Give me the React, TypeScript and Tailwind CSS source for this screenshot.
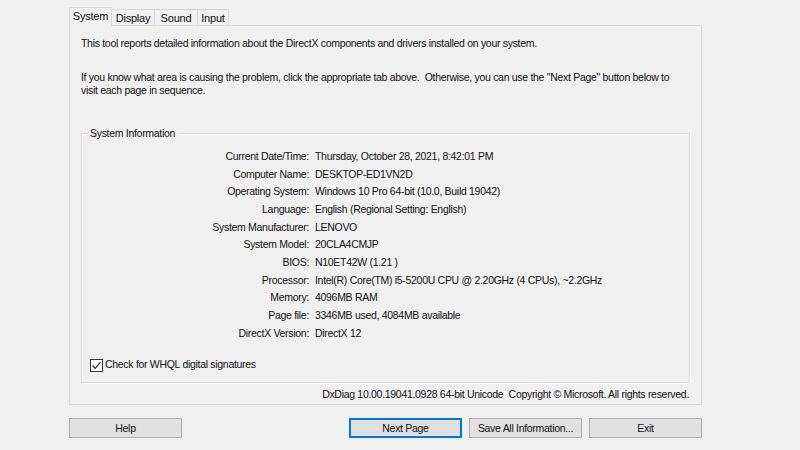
import React from 'react';

const rows: [string, string][] = [
  ['Current Date/Time:', 'Thursday, October 28, 2021, 8:42:01 PM'],
  ['Computer Name:', 'DESKTOP-ED1VN2D'],
  ['Operating System:', 'Windows 10 Pro 64-bit (10.0, Build 19042)'],
  ['Language:', 'English (Regional Setting: English)'],
  ['System Manufacturer:', 'LENOVO'],
  ['System Model:', '20CLA4CMJP'],
  ['BIOS:', 'N10ET42W (1.21 )'],
  ['Processor:', 'Intel(R) Core(TM) i5-5200U CPU @ 2.20GHz (4 CPUs), ~2.2GHz'],
  ['Memory:', '4096MB RAM'],
  ['Page file:', '3346MB used, 4084MB available'],
  ['DirectX Version:', 'DirectX 12'],
];

const Button: React.FC<{ label: string; focused?: boolean }> = ({ label, focused }) => (
  <button
    className={`w-[113px] h-[20px] bg-[#e1e1e1] text-[10.5px] tracking-[-0.3px] text-[#111] leading-none ${
      focused ? 'border-2 border-[#0078d7]' : 'border border-[#adadad]'
    }`}
  >
    {label}
  </button>
);

export default function App() {
  return (
    <div
      className="w-[800px] h-[450px] bg-[#f0f0f0] text-[#111] text-[10.5px] tracking-[-0.3px] pl-[69px] pt-[7px] overflow-hidden"
      style={{ fontFamily: '"Liberation Sans", Arial, sans-serif' }}
    >
      <div className="w-[633px]">
        <div className="flex items-end h-[19px] relative z-10 text-[11px] tracking-[-0.2px]">
          <div className="w-[43px] h-[19px] border border-b-0 border-[#d9d9d9] bg-[#f0f0f0] flex items-center justify-center pb-[1px]">
            System
          </div>
          <div className="w-[43px] h-[17px] border border-l-0 border-b-0 border-[#d9d9d9] flex items-center justify-center">
            Display
          </div>
          <div className="w-[43px] h-[17px] border border-l-0 border-b-0 border-[#d9d9d9] flex items-center justify-center">
            Sound
          </div>
          <div className="w-[31px] h-[17px] border border-l-0 border-b-0 border-[#d9d9d9] flex items-center justify-center">
            Input
          </div>
        </div>
        <div className="h-[380px] -mt-[1px] border border-[#d9d9d9] px-[11px] pt-[11px] flex flex-col">
          <p className="leading-[13px]">
            This tool reports detailed information about the DirectX components and drivers installed on your system.
          </p>
          <p className="mt-[21px] leading-[13px] w-[600px]">
            If you know what area is causing the problem, click the appropriate tab above.&nbsp; Otherwise, you can use the "Next Page" button below to visit each page in sequence.
          </p>
          <div className="mt-[36px] h-[250px] border border-[#dcdcdc] shadow-[inset_1px_1px_0_#fff,1px_1px_0_#fff] relative flex flex-col">
            <span className="absolute -top-[7px] left-[6px] px-[2px] bg-[#f0f0f0] leading-[13px]">
              System Information
            </span>
            <div className="mt-[14px] flex flex-col">
              {rows.map(([k, v]) => (
                <div key={k} className="flex h-[17.7px] items-center">
                  <span className="w-[227px] text-right">{k}</span>
                  <span className="ml-[6px]">{v}</span>
                </div>
              ))}
            </div>
            <div className="mt-auto mb-[9px] ml-[8px] flex items-center gap-[2px]">
              <span className="w-[13px] h-[13px] border border-[#333] bg-white flex items-center justify-center">
                <svg width="11" height="11" viewBox="0 0 11 11">
                  <path d="M1.5 5.5 L4.2 8.3 L9.5 2.2" fill="none" stroke="#222" strokeWidth="1.2" />
                </svg>
              </span>
              <span>Check for WHQL digital signatures</span>
            </div>
          </div>
          <div className="mt-[4px] text-right pr-[1px]">
            DxDiag 10.00.19041.0928 64-bit Unicode&nbsp; Copyright © Microsoft. All rights reserved.
          </div>
        </div>
        <div className="mt-[13px] flex items-center">
          <Button label="Help" />
          <div className="ml-auto flex gap-[7px]">
            <Button label="Next Page" focused />
            <Button label="Save All Information..." />
            <Button label="Exit" />
          </div>
        </div>
      </div>
    </div>
  );
}
